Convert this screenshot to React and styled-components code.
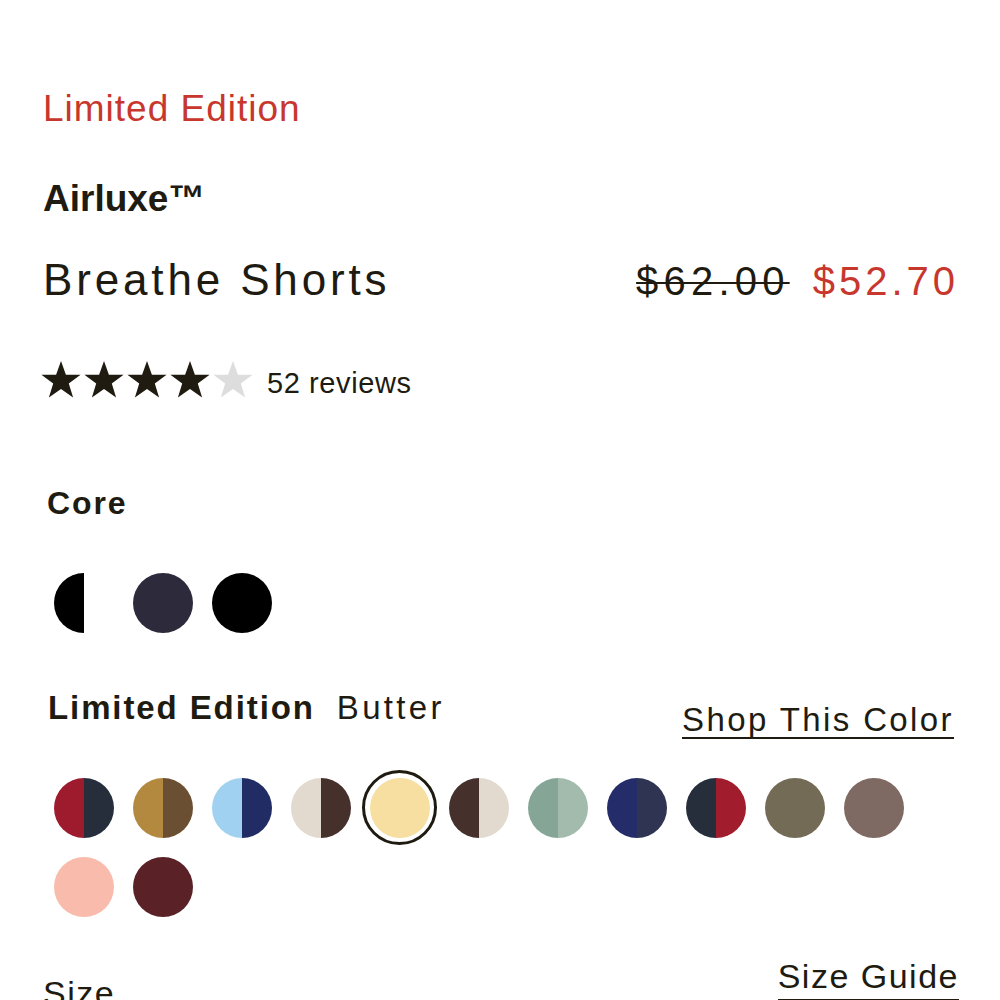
import React from "react";
import styled, { createGlobalStyle } from "styled-components";

const GlobalStyle = createGlobalStyle`
  html, body {
    margin: 0;
    padding: 0;
    background: #ffffff;
  }
  body {
    font-family: "Liberation Sans", Arial, sans-serif;
    color: #201b10;
  }
  * { box-sizing: border-box; }
`;

const INK = "#201b10";
const RED = "#c8372d";

const Page = styled.main`
  width: 1000px;
  height: 1000px;
  overflow: hidden;
  padding: 90px 43px 0 43px;
  display: flex;
  flex-direction: column;
`;

const Eyebrow = styled.div`
  font-size: 37px;
  line-height: 37px;
  color: ${RED};
  letter-spacing: 1px;
`;

const Brand = styled.div`
  margin-top: 53px;
  font-size: 37px;
  line-height: 37px;
  font-weight: 700;
  color: ${INK};
`;

const TitleRow = styled.div`
  margin-top: 41px;
  display: flex;
  justify-content: space-between;
  align-items: baseline;
`;

const Title = styled.h1`
  margin: 0;
  font-size: 44px;
  line-height: 44px;
  font-weight: 400;
  letter-spacing: 3.85px;
  color: ${INK};
`;

const PriceGroup = styled.div`
  display: flex;
  align-items: baseline;
  gap: 23px;
  margin-right: -2px;
`;

const Price = styled.span`
  font-size: 40px;
  line-height: 40px;
  letter-spacing: ${(p) => (p.$sale ? 4 : 5.2)}px;
  color: ${(p) => (p.$sale ? RED : INK)};
  text-decoration: ${(p) => (p.$sale ? "none" : "line-through")};
  text-decoration-thickness: 2px;
`;

const RatingRow = styled.div`
  margin-top: 57px;
  display: flex;
  align-items: center;
`;

const Stars = styled.div`
  display: flex;
  gap: 1px;
  margin-left: -3px;
`;

const ReviewCount = styled.span`
  margin-left: 13px;
  margin-top: 10px;
  font-size: 29px;
  line-height: 29px;
  letter-spacing: 0.6px;
  color: ${INK};
`;

const ColorGroup = styled.section`
  margin-top: ${(p) => p.$top}px;
  padding-left: 4px;
  display: flex;
  flex-direction: column;
`;

const GroupHeader = styled.div`
  display: flex;
  align-items: flex-start;
  justify-content: space-between;
`;

const GroupTitle = styled.div`
  display: flex;
  align-items: baseline;
  gap: 22px;
  padding-left: 1px;
`;

const GroupName = styled.span`
  font-size: ${(p) => p.$size}px;
  line-height: ${(p) => p.$size}px;
  font-weight: 700;
  letter-spacing: 1.9px;
  color: ${INK};
`;

const SelectedName = styled.span`
  font-size: 33px;
  line-height: 33px;
  letter-spacing: 3.3px;
  color: ${INK};
`;

const UnderlineLink = styled.a`
  margin-top: ${(p) => p.$top}px;
  font-size: ${(p) => p.$size}px;
  line-height: ${(p) => p.$size}px;
  letter-spacing: ${(p) => p.$spacing}px;
  padding-bottom: ${(p) => p.$pad}px;
  border-bottom: 2px solid ${INK};
  color: ${INK};
  text-decoration: none;
  margin-right: ${(p) => p.$right}px;
`;

const SwatchList = styled.div`
  margin-top: ${(p) => p.$top}px;
  margin-left: -1px;
  display: flex;
  flex-wrap: wrap;
  gap: 4px;
`;

const Swatch = styled.button`
  width: 75px;
  height: 75px;
  padding: 0;
  border-radius: 50%;
  border: 3px solid ${(p) => (p.$selected ? INK : "transparent")};
  background: transparent;
  display: flex;
  align-items: center;
  justify-content: center;
  cursor: pointer;
`;

const Dot = styled.span`
  width: 60px;
  height: 60px;
  border-radius: 50%;
  background: ${(p) =>
    p.$b ? `linear-gradient(to right, ${p.$a} 50%, ${p.$b} 50%)` : p.$a};
`;

const SizeRow = styled.div`
  margin-top: 35px;
  display: flex;
  justify-content: space-between;
  align-items: flex-start;
`;

const SizeLabel = styled.span`
  margin-top: 17px;
  font-size: 34px;
  line-height: 34px;
  letter-spacing: 1.5px;
  color: ${INK};
`;

const Star = ({ filled }) => (
  <svg width="42" height="38" viewBox="0 0 42 38" aria-hidden="true">
    <polygon
      points="21,1 25.9,14.8 40.6,14.8 28.8,23.6 33.1,37.4 21,29 8.9,37.4 13.2,23.6 1.4,14.8 16.1,14.8"
      fill={filled ? INK : "#dddddd"}
    />
  </svg>
);

const coreColors = [
  { a: "#000000", b: "#ffffff" },
  { a: "#2d2a3b" },
  { a: "#000000" },
];

const limitedColors = [
  { a: "#9e1b2e", b: "#262d3b" },
  { a: "#b3883f", b: "#6b4f33" },
  { a: "#a0d1f0", b: "#212c64" },
  { a: "#e2d9cf", b: "#45302c" },
  { a: "#f6dfa0", selected: true },
  { a: "#45302c", b: "#e2d9cf" },
  { a: "#85a597", b: "#a2bbac" },
  { a: "#242d69", b: "#2e3452" },
  { a: "#262d3b", b: "#a11d2e" },
  { a: "#736b55" },
  { a: "#7e6963" },
  { a: "#f9bcac" },
  { a: "#5a2127" },
];

export default function App() {
  return (
    <>
      <GlobalStyle />
      <Page>
        <Eyebrow>Limited Edition</Eyebrow>
        <Brand>Airluxe™</Brand>
        <TitleRow>
          <Title>Breathe Shorts</Title>
          <PriceGroup>
            <Price>$62.00</Price>
            <Price $sale>$52.70</Price>
          </PriceGroup>
        </TitleRow>
        <RatingRow>
          <Stars>
            {[1, 2, 3, 4, 5].map((i) => (
              <Star key={i} filled={i <= 4} />
            ))}
          </Stars>
          <ReviewCount>52 reviews</ReviewCount>
        </RatingRow>

        <ColorGroup $top={89}>
          <GroupName $size={32}>Core</GroupName>
          <SwatchList $top={46}>
            {coreColors.map((c, i) => (
              <Swatch key={i} $selected={c.selected}>
                <Dot $a={c.a} $b={c.b} />
              </Swatch>
            ))}
          </SwatchList>
        </ColorGroup>

        <ColorGroup $top={51}>
          <GroupHeader>
            <GroupTitle>
              <GroupName $size={33}>Limited Edition</GroupName>
              <SelectedName>Butter</SelectedName>
            </GroupTitle>
            <UnderlineLink href="#" $top={12} $size={33} $spacing={2.4} $pad={1} $right={3}>
              Shop This Color
            </UnderlineLink>
          </GroupHeader>
          <SwatchList $top={31}>
            {limitedColors.map((c, i) => (
              <Swatch key={i} $selected={c.selected}>
                <Dot $a={c.a} $b={c.b} />
              </Swatch>
            ))}
          </SwatchList>
        </ColorGroup>

        <SizeRow>
          <SizeLabel>Size</SizeLabel>
          <UnderlineLink href="#" $top={0} $size={34} $spacing={1.5} $pad={6} $right={-2}>
            Size Guide
          </UnderlineLink>
        </SizeRow>
      </Page>
    </>
  );
}
